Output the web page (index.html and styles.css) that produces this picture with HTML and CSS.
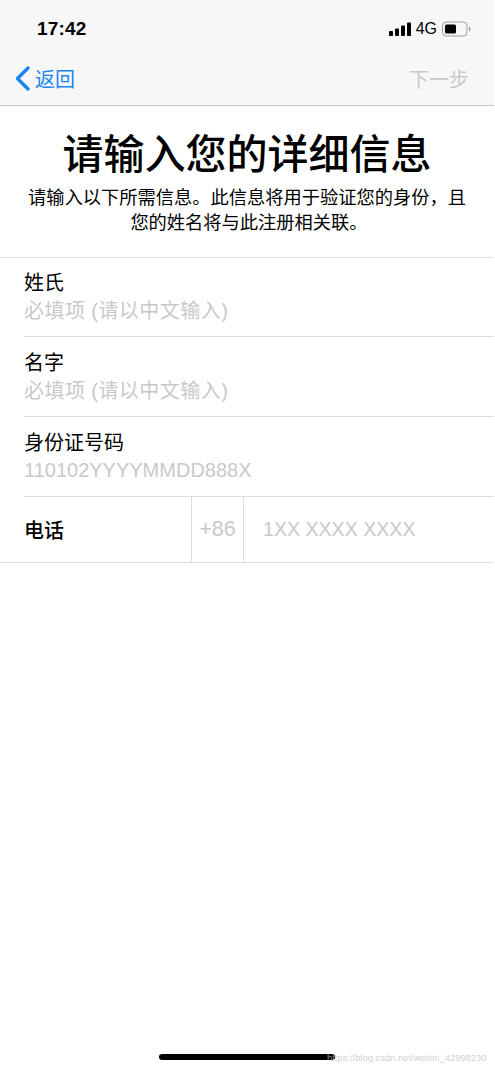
FILE: index.html
```html
<!DOCTYPE html>
<html lang="zh-CN">
<head>
  <meta charset="UTF-8">
  <title>请输入您的详细信息</title>
  <link rel="stylesheet" href="styles.css">
</head>
<body>

<div class="screen">
  <header class="top-bar">
    <div class="status-row">
      <span class="time">17:42</span>
      <div class="status-icons">
        <svg class="signal" width="22" height="14" viewBox="0 0 22 14">
          <rect x="0" y="9" width="4" height="5" rx="1"/>
          <rect x="6" y="6.5" width="4" height="7.5" rx="1"/>
          <rect x="12" y="3.5" width="4" height="10.5" rx="1"/>
          <rect x="18" y="0.5" width="4" height="13.5" rx="1"/>
        </svg>
        <span class="network">4G</span>
        <svg class="battery" width="29" height="16" viewBox="0 0 29 16">
          <rect x="0.5" y="1" width="24.5" height="14" rx="3.5" fill="none" stroke="#9a9a9a"/>
          <rect x="3" y="3.5" width="11" height="9" rx="1.5" fill="#000"/>
          <path d="M27 5.5c1.2.4 1.5 1.4 1.5 2.5s-.3 2.1-1.5 2.5z" fill="#9a9a9a"/>
        </svg>
      </div>
    </div>
    <nav class="nav-row">
      <a class="back">
        <svg width="17" height="25" viewBox="0 0 17 25">
          <path d="M14 2 L3.5 12.5 L14 23" fill="none" stroke="#1a84f6" stroke-width="3.4" stroke-linecap="round" stroke-linejoin="round"/>
        </svg>
        <span>返回</span>
      </a>
      <span class="next">下一步</span>
    </nav>
  </header>

  <section class="intro">
    <h1>请输入您的详细信息</h1>
    <p>请输入以下所需信息。此信息将用于验证您的身份，且<br><span class="intro-second">您的姓名将与此注册相关联。</span></p>
  </section>

  <form class="fields">
    <div class="field">
      <div class="field-label">姓氏</div>
      <div class="field-hint hint-cn">必填项 (请以中文输入)</div>
    </div>
    <div class="field">
      <div class="field-label">名字</div>
      <div class="field-hint hint-cn">必填项 (请以中文输入)</div>
    </div>
    <div class="field">
      <div class="field-label">身份证号码</div>
      <div class="field-hint">110102YYYYMMDD888X</div>
    </div>
    <div class="phone-row">
      <div class="phone-label">电话</div>
      <div class="phone-code">+86</div>
      <div class="phone-number">1XX XXXX XXXX</div>
    </div>
  </form>

  <div class="home-bar"></div>
  <span class="watermark">https://blog.csdn.net/weixin_42998230</span>
</div>

</body>
</html>
```

FILE: styles.css
```css
html, body {
  margin: 0;
  background-color: #ffffff;
}
body {
  font-family: "Noto Sans CJK SC", "Liberation Sans", sans-serif;
  color: #000000;
}
.screen {
  position: relative;
  width: 494px;
  height: 1071px;
  display: flex;
  flex-direction: column;
  overflow: hidden;
}
.top-bar {
  height: 105px;
  background-color: #f7f7f7;
  border-bottom: 1px solid #c4c4c4;
  flex-shrink: 0;
}
.status-row {
  height: 52px;
  padding: 3px 23px 0 37px;
  display: flex;
  align-items: center;
  justify-content: space-between;
}
.time {
  font-family: "Liberation Sans", sans-serif;
  font-size: 19px;
  font-weight: bold;
  letter-spacing: 0.2px;
}
.status-icons {
  display: flex;
  align-items: center;
  gap: 5px;
}
.network {
  font-family: "Liberation Sans", sans-serif;
  font-size: 16px;
}
.nav-row {
  height: 47px;
  padding: 0 25px 0 14px;
  display: flex;
  align-items: center;
  justify-content: space-between;
}
.back {
  display: flex;
  align-items: center;
  gap: 4px;
  color: #1a84f6;
  font-size: 20px;
}
.next {
  color: #c9c9c9;
  font-size: 20px;
}
.intro {
  text-align: center;
  height: 151px;
  flex-shrink: 0;
}
.intro h1 {
  margin: 18px 0 0;
  font-size: 41px;
  line-height: 54px;
  font-weight: 500;
}
.intro p {
  margin: 6px 0 0;
  font-size: 18.25px;
  line-height: 25px;
}
.intro-second {
  padding-left: 4px;
}
.fields {
  border-top: 1px solid #e2e2e2;
  border-bottom: 1px solid #dcdcdc;
  flex-shrink: 0;
}
.field {
  margin-left: 24px;
  height: 68px;
  padding-top: 11px;
  border-bottom: 1px solid #dcdcdc;
  font-size: 20px;
  line-height: 28px;
}
.field:first-child {
  padding-top: 10px;
}
.field-hint {
  color: #c9c9c9;
  font-family: "Liberation Sans", "Noto Sans CJK SC", sans-serif;
}
.hint-cn {
  margin-top: 1px;
  letter-spacing: 0.45px;
}
.phone-row {
  margin-left: 24px;
  height: 65px;
  display: flex;
  align-items: center;
  font-size: 20px;
}
.phone-label {
  width: 167px;
  font-weight: 500;
}
.phone-code {
  width: 51px;
  height: 100%;
  display: flex;
  align-items: center;
  justify-content: center;
  border-left: 1px solid #dcdcdc;
  border-right: 1px solid #dcdcdc;
  color: #c9c9c9;
  font-family: "Liberation Sans", sans-serif;
  font-size: 21.5px;
}
.phone-number {
  padding-left: 19px;
  color: #c9c9c9;
  font-family: "Liberation Sans", sans-serif;
  font-size: 19.6px;
}
.home-bar {
  margin: auto 0 11px 159px;
  width: 176px;
  height: 6px;
  border-radius: 3px;
  background-color: #000000;
  flex-shrink: 0;
}
.watermark {
  position: absolute;
  left: 327px;
  top: 1052px;
  font-family: "Liberation Sans", sans-serif;
  font-size: 9.4px;
  color: rgba(190, 190, 190, 0.75);
}
```
